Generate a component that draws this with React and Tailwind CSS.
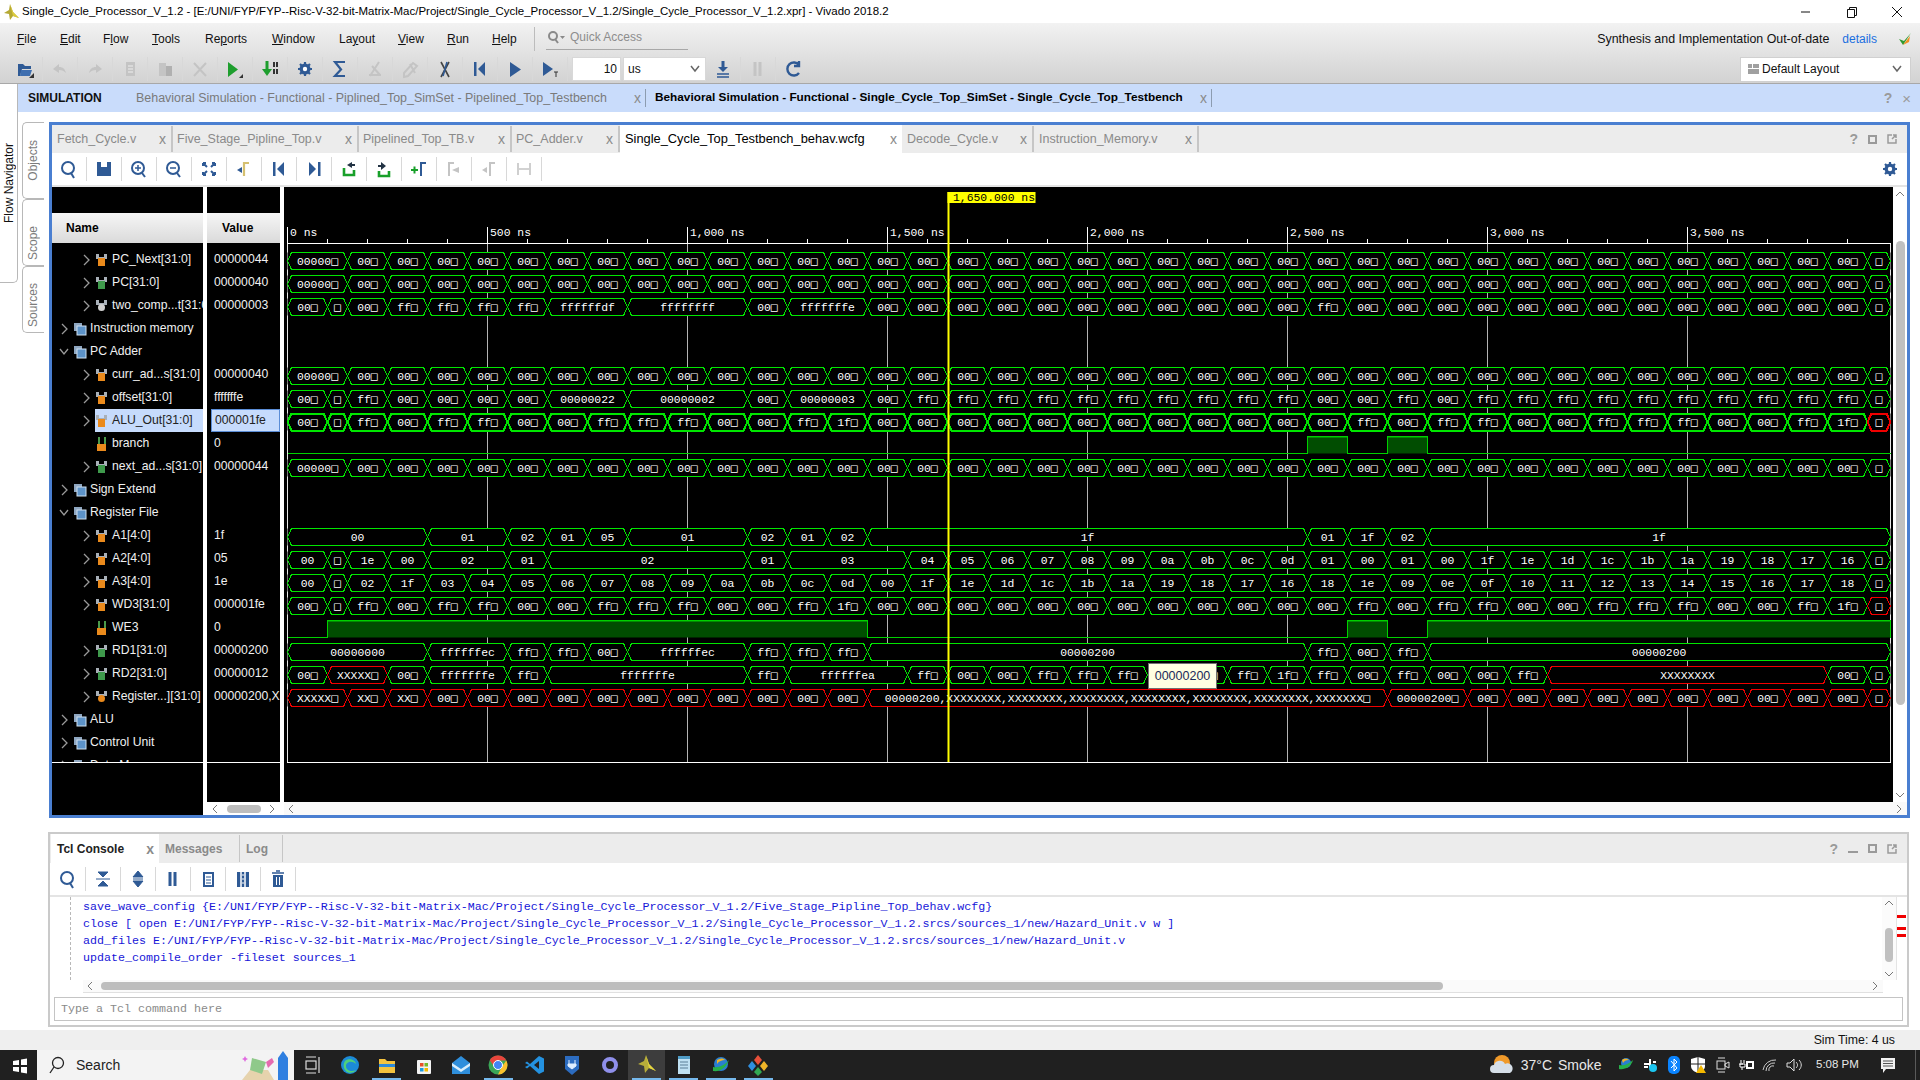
import React from 'react';

const NAVY = '#2f5a95';
const GREY = '#c4c4c4';
const GREEN = '#00e600';
const RED = '#f00000';

// ---------- waveform data ----------
const o = '00□';
const f = 'ff□';
const b = '□';
const l = '1f□';
const z = '00000□';
const rep = (label, n) => Array.from({ length: n }, () => [label, 1]);
const list = (s) => s.split(' ').map((x) => [x === 'b' ? b : x, 1]);

const pcRow = [[z, 2], ...rep(o, 38), [b, 1]];
const aluRow = [
  [o, 1], [b, 1], [f, 1], [o, 1], [f, 1], [f, 1], [o, 1], [o, 1], [f, 1], [f, 1], [f, 1], [o, 1], [o, 1], [f, 1], [l, 1],
  ...rep(o, 12),
  [f, 1], [o, 1], [f, 1], [f, 1], [o, 1], [o, 1], [f, 1], [f, 1], [f, 1], [o, 1], [o, 1], [f, 1], [l, 1], [b, 1, true],
];
const longX = '00000200,XXXXXXXX,XXXXXXXX,XXXXXXXX,XXXXXXXX,XXXXXXXX,XXXXXXXX,XXXXXXX□';

const busRows = {
  0: pcRow,
  1: pcRow,
  2: [[o, 1], [b, 1], [o, 1], ...rep(f, 4), ['ffffffdf', 2], ['ffffffff', 3], [o, 1], ['fffffffe', 2], ...rep(o, 11), [f, 1], ...rep(o, 13), [b, 1]],
  5: pcRow,
  6: [[o, 1], [b, 1], [f, 1], ...rep(o, 4), ['00000022', 2], ['00000002', 3], [o, 1], ['00000003', 2], [o, 1], ...rep(f, 10), [o, 1], [o, 1], [f, 1], [o, 1], ...rep(f, 10), [b, 1]],
  7: aluRow,
  9: pcRow,
  12: [['00', 4], ['01', 2], ['02', 1], ['01', 1], ['05', 1], ['01', 3], ['02', 1], ['01', 1], ['02', 1], ['1f', 11], ['01', 1], ['1f', 1], ['02', 1], ['1f', 12]],
  13: [['00', 1], [b, 1], ['1e', 1], ['00', 1], ['02', 2], ['01', 1], ['02', 5], ['01', 1], ['03', 3], ...list('04 05 06 07 08 09 0a 0b 0c 0d 01 00 01 00 1f 1e 1d 1c 1b 1a 19 18 17 16 b')],
  14: list('00 b 02 1f 03 04 05 06 07 08 09 0a 0b 0c 0d 00 1f 1e 1d 1c 1b 1a 19 18 17 16 18 1e 09 0e 0f 10 11 12 13 14 15 16 17 18 b'),
  15: aluRow,
  17: [['00000000', 4], ['ffffffec', 2], [f, 1], [f, 1], [o, 1], ['ffffffec', 3], [f, 1], [f, 1], [f, 1], ['00000200', 11], [f, 1], [o, 1], [f, 1], ['00000200', 12]],
  18: [[o, 1], ['XXXXX□', 2, true], [o, 1], ['fffffffe', 2], [f, 1], ['fffffffe', 5], [f, 1], ['ffffffea', 3], [f, 1], [o, 1], [o, 1], ...rep(f, 6), [l, 1], [f, 1], [o, 1], [f, 1], [o, 1], [o, 1], [f, 1], ['XXXXXXXX', 7, true], [o, 1], [b, 1]],
  19: [['XXXXX□', 2], ['XX□', 1], ['XX□', 1], ...rep(o, 11), [longX, 13], ['00000200□', 2], ...rep(o, 10), [b, 1]].map((s) => [s[0], s[1], true]),
};

// bit rows: offsets in px where the level is high
const bitRows = {
  8: [[1020, 1060], [1100, 1140]],
  16: [[40, 580], [1060, 1100], [1140, 1603]],
};

const slotX = (k) => (k === 0 ? 0 : k === 1 ? 40 : k >= 41 ? 1603 : 60 + 40 * (k - 2));
const X0 = 3.5;
const rowTop = (i) => 65.5 + 23 * i;

const BusLabel = ({ text }) => {
  if (!text.endsWith('□')) return text;
  return (
    <>
      {text.slice(0, -1)}
      <tspan className="font-['DejaVu_Sans_Mono',monospace] text-[11.5px]">□</tspan>
    </>
  );
};

const Bus = ({ i, segs }) => {
  let k = 0;
  const top = rowTop(i);
  const thick = i === 7;
  return (
    <g>
      <rect x={X0} y={top} width={1603} height={17} fill="#000" />
      {segs.map((s, idx) => {
        const a = X0 + slotX(k);
        k += s[1];
        const c = X0 + slotX(k);
        const mid = top + 8.5;
        const pts = `${a},${mid} ${a + 4},${top} ${c - 4},${top} ${c},${mid} ${c - 4},${top + 17} ${a + 4},${top + 17}`;
        return (
          <g key={idx}>
            <polygon points={pts} fill="none" stroke={s[2] ? RED : GREEN} strokeWidth={thick ? 2 : 1} shapeRendering="crispEdges" />
            <text x={(a + c) / 2} y={top + 12.5} textAnchor="middle" fill="#fff" className="text-[11.4px]"><BusLabel text={s[0]} /></text>
          </g>
        );
      })}
    </g>
  );
};

const Bit = ({ i, pulses }) => {
  const top = rowTop(i);
  const bot = top + 17;
  let d = `M${X0} ${bot}`;
  pulses.forEach(([a, c]) => {
    d += ` L${X0 + a} ${bot} L${X0 + a} ${top} L${X0 + c} ${top} L${X0 + c} ${bot}`;
  });
  d += ` L${X0 + 1603} ${bot}`;
  return (
    <g>
      {pulses.map(([a, c]) => (
        <g key={a}>
          <rect x={X0 + a} y={top} width={c - a} height={17} fill="#014d01" />
          <rect x={X0 + a} y={top + 0.5} width={c - a} height={1} fill="#008c00" />
        </g>
      ))}
      <path d={d} fill="none" stroke="#00d000" strokeWidth="1" shapeRendering="crispEdges" />
    </g>
  );
};

const Waveform = () => {
  const majors = [0, 1, 2, 3, 4, 5, 6, 7];
  const labels = ['0 ns', '500 ns', '1,000 ns', '1,500 ns', '2,000 ns', '2,500 ns', '3,000 ns', '3,500 ns'];
  const minors = Array.from({ length: 40 }, (_, n) => n);
  return (
    <svg width="1609" height="615" className="block font-['Liberation_Mono',monospace]">
      <rect width="1609" height="615" fill="#000" />
      {majors.slice(1).map((m) => (
        <rect key={m} x={3 + 200 * m} y={56} width={1} height={519} fill="#b4b4b4" />
      ))}
      <rect x={3} y={40} width={1} height={535} fill="#e8e8e8" />
      <rect x={1606} y={56} width={1} height={519} fill="#e8e8e8" />
      <rect x={3} y={56} width={1604} height={1} fill="#fff" />
      <rect x={3} y={575} width={1604} height={1} fill="#fff" />
      {minors.map((n) => (
        <rect key={n} x={3 + 40 * n} y={n % 5 === 0 ? 40 : 52} width={1} height={n % 5 === 0 ? 16 : 4} fill="#fff" />
      ))}
      {majors.map((m) => (
        <text key={m} x={6 + 200 * m} y={49} fill="#fff" className="text-[11.4px]">{labels[m]}</text>
      ))}
      {Object.entries(busRows).map(([i, segs]) => (
        <Bus key={i} i={Number(i)} segs={segs} />
      ))}
      {Object.entries(bitRows).map(([i, p]) => (
        <Bit key={i} i={Number(i)} pulses={p} />
      ))}
      <rect x={663.5} y={5} width={2} height={570} fill="#ffff00" />
      <rect x={663.5} y={5} width={88} height={11} fill="#ffff00" />
      <text x={669} y={14} fill="#000" className="text-[11.4px]">1,650.000 ns</text>
    </svg>
  );
};

// ---------- small svg icons ----------
const Svg = ({ w = 20, h = 20, children, className = '' }) => (
  <svg width={w} height={h} viewBox={`0 0 ${w} ${h}`} className={`block shrink-0 ${className}`}>{children}</svg>
);

const Corner = () => <path d="M19 19h-5l5-5z" fill="#333" />;

const icons = {
  open: <><Corner /><path d="M3 5h5l2 2h6v3H7l-2 7H3z" fill={NAVY} /><path d="M6 11h11l-2 6H5z" fill="#3f6fb0" /></>,
  undo: <path d="M3 10l6-5v3c4 0 6 2 7 6-2-2-4-3-7-3v3z" fill={GREY} />,
  redo: <path d="M17 10l-6-5v3c-4 0-6 2-7 6 2-2 4-3 7-3v3z" fill={GREY} />,
  copy: <><rect x="6" y="3" width="9" height="14" fill={GREY} /><path d="M8 7h5M8 10h5M8 13h5" stroke="#eee" /></>,
  paste: <><rect x="4" y="4" width="7" height="13" fill={GREY} /><rect x="11" y="7" width="6" height="10" fill="#b0b0b0" /></>,
  cross: <path d="M4 4l12 13M16 4L4 17" stroke={GREY} strokeWidth="2" />,
  run: <><path d="M3 3l10 7.500L3 18z" fill="#1e9e2e" /><path d="M18 19h-4l4-4z" fill="#333" /></>,
  step: <><path d="M7 2v9" stroke="#1e9e2e" strokeWidth="3" /><path d="M2 10h10l-5 7z" fill="#1e9e2e" /><rect x="13" y="3" width="2" height="5" fill="#333" /><rect x="16" y="3" width="2" height="5" fill="#333" /><rect x="13" y="10" width="2" height="5" fill="#333" /><rect x="16" y="10" width="2" height="5" fill="#333" /></>,
  gear: <><circle cx="10" cy="10" r="5.500" fill={NAVY} /><path d="M10 3v14M3 10h14M5 5l10 10M15 5L5 15" stroke={NAVY} strokeWidth="2.200" /><circle cx="10" cy="10" r="2.200" fill="#fff" /></>,
  sigma: <path d="M15 3H5l6 7.5L5 17h10" fill="none" stroke={NAVY} strokeWidth="2.2" />,
  checkOff: <><path d="M5 17L14 3M4 16h12" stroke={GREY} strokeWidth="2" /><path d="M7 7l8 9" stroke={GREY} strokeWidth="2" /></>,
  pencil: <path d="M4 14L13 4l4 3-9 10-4 1zM10 5l5 9" fill="none" stroke={GREY} strokeWidth="2" />,
  strike: <><path d="M6 3l8 15M14 3L6 18" stroke="#444" strokeWidth="1.600" /><path d="M12 3L8 17" stroke={NAVY} strokeWidth="1.600" /></>,
  first: <><rect x="4" y="3" width="2.5" height="14" fill={NAVY} /><path d="M15 3v14L8 10z" fill={NAVY} /></>,
  play: <path d="M5 3l11 7.5L5 18z" fill={NAVY} />,
  playT: <><path d="M3 3l10 7L3 17z" fill={NAVY} /><path d="M14 13h4M16 13v5" stroke="#333" /></>,
  last: <><rect x="14" y="3" width="2.5" height="14" fill={NAVY} /><path d="M5 3v14l7-7z" fill={NAVY} /></>,
  down: <><path d="M10 2v7" stroke={NAVY} strokeWidth="3" /><path d="M5 8h10l-5 5z" fill={NAVY} /><path d="M4 15h12M4 18h12" stroke={NAVY} strokeWidth="1.5" /></>,
  pause: <path d="M7 3v14M12 3v14" stroke={GREY} strokeWidth="3" />,
  pauseDark: <path d="M7 3v14M12 3v14" stroke={NAVY} strokeWidth="3" />,
  reload: <path d="M15 6a6.5 6.5 0 1 0 0 8M15 2v5h-5" fill="none" stroke={NAVY} strokeWidth="2.4" />,
  search: <><circle cx="9" cy="9" r="6" fill="none" stroke={NAVY} strokeWidth="2" /><path d="M12 14l3 5" stroke={NAVY} strokeWidth="2" /></>,
  save: <path fillRule="evenodd" d="M3 3h14v14H3zM7 3h6v5H7z" fill={NAVY} />,
  zoomIn: <><circle cx="9" cy="9" r="6" fill="none" stroke={NAVY} strokeWidth="2" /><path d="M13 14l3 4" stroke={NAVY} strokeWidth="2" /><path d="M6 9h6M9 6v6" stroke={NAVY} strokeWidth="1.5" /></>,
  zoomOut: <><circle cx="9" cy="9" r="6" fill="none" stroke={NAVY} strokeWidth="2" /><path d="M13 14l3 4" stroke={NAVY} strokeWidth="2" /><path d="M6 9h6" stroke={NAVY} strokeWidth="1.5" /></>,
  fit: <path d="M4 4l4 4M4 4h3M4 4v3M16 4l-4 4M16 4h-3M16 4v3M4 16l4-4M4 16h3M4 16v-3M16 16l-4-4M16 16h-3M16 16v-3" fill="none" stroke={NAVY} strokeWidth="2" />,
  marker: <><path d="M3 11l5-3v6z" fill={NAVY} /><path d="M10 17V4h5" fill="none" stroke="#d5c070" strokeWidth="2.2" /></>,
  greenUp: <><path d="M5 9v7h10v-5" fill="none" stroke="#18a02a" strokeWidth="2.600" /><path d="M8 6l5-3v6z" fill="#234" /><path d="M13 6h3" stroke="#234" strokeWidth="2" /></>,
  greenDn: <><path d="M5 12v5h10v-5" fill="none" stroke="#18a02a" strokeWidth="2.600" /><path d="M12 7L7 3v8z" fill="#234" /><path d="M4 7h3" stroke="#234" strokeWidth="2" /></>,
  addCur: <><path d="M2 11h7M5.5 7.5v7" stroke="#18a02a" strokeWidth="2" /><path d="M12 17V4h5" fill="none" stroke={NAVY} strokeWidth="2" /></>,
  gr1: <><path d="M5 17V4h5" fill="none" stroke={GREY} strokeWidth="2" /><path d="M8 11l7-3v6z" fill={GREY} /></>,
  gr2: <><path d="M3 11l5-3v6z" fill={GREY} /><path d="M11 17V4h5" fill="none" stroke={GREY} strokeWidth="2" /></>,
  gr3: <path d="M4 4v12M16 4v12M5 10h10" stroke={GREY} strokeWidth="1.6" />,
  collapse: <path d="M5 3h10l-5 5zM10 12l5 5H5zM3 10h14" fill={NAVY} stroke={NAVY} />,
  expand: <path d="M10 2l5 6H5zM5 12h10l-5 6zM5 10h10" fill={NAVY} stroke={NAVY} />,
  doc: <><rect x="6" y="4" width="9" height="13" fill="#fff" stroke={NAVY} strokeWidth="2" /><path d="M8 8h5M8 11h5M8 14h5" stroke={NAVY} /></>,
  cols: <><rect x="4" y="3" width="12" height="15" fill={NAVY} /><path d="M8 3v15M12 3v15" stroke="#fff" strokeWidth="1.500" /><path d="M9 6h2M9 10h2M9 14h2" stroke="#fff" /></>,
  trash: <><path d="M5 6h10v12H5z" fill={NAVY} /><path d="M4 4h12M8 2h4" stroke={NAVY} strokeWidth="1.6" /><path d="M8.5 8v8M11.5 8v8" stroke="#fff" /></>,
};

const Tool = ({ name, w = 'w-[35px]', sep = true }) => (
  <div className={`${w} h-[24px] flex items-center justify-center shrink-0 ${sep ? 'border-r border-[#d8d8d8]' : ''}`}>
    <Svg>{icons[name]}</Svg>
  </div>
);

const Close = ({ className = '' }) => <span className={`text-[#8a8a8a] text-[14px] leading-none ${className}`}>x</span>;

const Help = () => <span className="text-[#9a9a9a] font-bold text-[14px] leading-none">?</span>;
const Box = () => <span className="block w-[9px] h-[9px] border-2 border-[#9a9a9a]" />;
const Pop = () => (
  <Svg w={10} h={10}><path d="M5 1H1v8h8V5M5 5l4-4M6 1h3v3" fill="none" stroke="#9a9a9a" strokeWidth="1.5" /></Svg>
);

// ---------- title + menu ----------
const menus = [
  ['', 'F', 'ile', 'w-[43px]'], ['', 'E', 'dit', 'w-[43px]'], ['F', 'l', 'ow', 'w-[49px]'], ['', 'T', 'ools', 'w-[53px]'],
  ['Re', 'p', 'orts', 'w-[67px]'], ['', 'W', 'indow', 'w-[67px]'], ['La', 'y', 'out', 'w-[59px]'], ['', 'V', 'iew', 'w-[49px]'],
  ['', 'R', 'un', 'w-[45px]'], ['', 'H', 'elp', 'w-[42px]'],
];

const TitleBar = () => (
  <div className="h-[23px] bg-white flex items-center shrink-0">
    <Svg w={18} h={20} className="ml-[3px] mr-[1px]">
      <path d="M7 2l3 8 6 6-6-2-3 4-1-6-5-1 5-3z" fill="#b5a934" />
      <path d="M7 2l3 8 6 6-6-2z" fill="#dccb3c" />
    </Svg>
    <span className="text-[11.47px] text-black whitespace-nowrap">
      Single_Cycle_Processor_V_1.2 - [E:/UNI/FYP/FYP--Risc-V-32-bit-Matrix-Mac/Project/Single_Cycle_Processor_V_1.2/Single_Cycle_Processor_V_1.2.xpr] - Vivado 2018.2
    </span>
    <div className="ml-auto flex items-center text-[#111]">
      <Svg w={46} h={20}><path d="M19 10h9" stroke="#111" /></Svg>
      <Svg w={46} h={20}><path d="M19.5 7.5h7v8h-7zM21.5 7.5v-2h7v8h-2" fill="none" stroke="#111" /></Svg>
      <Svg w={46} h={20}><path d="M18 5l10 10M28 5L18 15" stroke="#111" /></Svg>
    </div>
  </div>
);

const MenuBar = () => (
  <div className="h-[32px] flex items-center pl-[17px] pr-[4px]">
    {menus.map(([a, u, c, w]) => (
      <span key={a + u + c} className={`${w} shrink-0 text-[12px] text-[#111]`}>
        {a}<span className="underline">{u}</span>{c}
      </span>
    ))}
    <div className="h-[24px] border-l border-[#bcbcbc] pl-[11px] flex items-center">
      <div className="w-[142px] h-[25px] border-b border-[#a8a8a8] flex items-center mt-[-4px]">
        <Svg w={24} h={16}><circle cx="7" cy="7" r="4" fill="none" stroke="#8a8a8a" strokeWidth="2" /><path d="M9 10l3 4" stroke="#8a8a8a" strokeWidth="2" /><path d="M14 7h5l-2.500 3z" fill="#8a8a8a" /></Svg>
        <span className="text-[12px] text-[#8d8d8d]">Quick Access</span>
      </div>
    </div>
    <span className="ml-auto text-[12.4px] text-[#111]">Synthesis and Implementation Out-of-date</span>
    <span className="ml-[13px] text-[12px] text-[#1a6fe0]">details</span>
    <Svg w={20} h={20} className="ml-[19px]"><path d="M3 10l4 6 8-12-7 8z" fill="#2f9a2f" /><path d="M7 16l6-3 1-6z" fill="#f09020" /></Svg>
  </div>
);

const MainTools = () => (
  <div className="h-[28px] flex items-center pl-[8px] pr-[9px]">
    {['open', 'undo', 'redo', 'copy', 'paste', 'cross', 'run', 'step', 'gear', 'sigma', 'checkOff', 'pencil', 'strike', 'first', 'play', 'playT'].map((n) => (
      <Tool key={n} name={n} />
    ))}
    <div className="ml-[4px] w-[49px] h-[24px] bg-white border border-[#d8d8d8] text-[12px] text-[#111] flex items-center justify-end pr-[3px]">10</div>
    <div className="ml-[2px] w-[83px] h-[24px] bg-white border border-[#d8d8d8] text-[12px] text-[#111] flex items-center justify-between pl-[4px] pr-[5px]">
      us
      <Svg w={10} h={8}><path d="M1 1l4 5 4-5" fill="none" stroke="#666" strokeWidth="1.5" /></Svg>
    </div>
    <div className="flex">
      <Tool name="down" />
      <Tool name="pause" />
      <Tool name="reload" sep={false} />
    </div>
    <div className="ml-auto w-[171px] h-[25px] bg-white border border-[#d0d0d0] flex items-center pl-[6px] pr-[8px] text-[12px] text-[#111]">
      <Svg w={14} h={12} className="mr-[1px]"><rect x="1" y="1" width="4" height="4" fill="#a0a0a0" /><rect x="6" y="1" width="6" height="4" fill="#a0a0a0" /><rect x="1" y="6" width="11" height="5" fill="#a0a0a0" /></Svg>
      Default Layout
      <Svg w={10} h={8} className="ml-auto"><path d="M1 1l4 5 4-5" fill="none" stroke="#666" strokeWidth="1.5" /></Svg>
    </div>
  </div>
);

const SimBar = () => (
  <div className="h-[28px] bg-[#c9dcfb] flex items-center shrink-0 text-[12px]">
    <span className="ml-[10px] w-[108px] font-bold text-[#111]">SIMULATION</span>
    <span className="text-[#7a7a7a] w-[498px] whitespace-nowrap text-[12.45px]">Behavioral Simulation - Functional - Piplined_Top_SimSet - Pipelined_Top_Testbench</span>
    <Close className="w-[11px]" />
    <div className="h-[18px] border-l border-[#8c9cb0] mr-[9px]" />
    <span className="text-black font-bold w-[545px] whitespace-nowrap text-[11.8px]">Behavioral Simulation - Functional - Single_Cycle_Top_SimSet - Single_Cycle_Top_Testbench</span>
    <Close className="w-[11px]" />
    <div className="h-[18px] border-l border-[#8c9cb0]" />
    <div className="ml-auto flex items-center gap-[10px] pr-[9px]">
      <Help />
      <span className="text-[#9a9a9a] text-[15px] leading-none">×</span>
    </div>
  </div>
);

// ---------- waveform panel ----------
const fileTabs = [
  ['Fetch_Cycle.v', 'w-[121px]', 'pl-[5px]'], ['Five_Stage_Pipline_Top.v', 'w-[186px]', 'pl-[4px]'], ['Pipelined_Top_TB.v', 'w-[153px]', 'pl-[4px]'],
  ['PC_Adder.v', 'w-[108px]', 'pl-[4px]'], ['Single_Cycle_Top_Testbench_behav.wcfg', 'w-[282px]', 'pl-[5px]', true], ['Decode_Cycle.v', 'w-[132px]', 'pl-[5px]'],
  ['Instruction_Memory.v', 'w-[165px]', 'pl-[5px]'],
];

const SigIcon = ({ t }) => {
  const body = t === 'in' ? '#3f9a4c' : t === 'int' ? '#9a9a9a' : '#ea8a1c';
  if (t === 'bit') {
    return (
      <Svg w={14} h={14}>
        <path d="M4 0v7M10 0v7" stroke="#4b9a4b" strokeWidth="2" />
        <rect x="2" y="7" width="9" height="7" fill="#ea8a1c" />
      </Svg>
    );
  }
  return (
    <Svg w={14} h={14}>
      <path d="M1 1h3v3h5V1h3v5H1z" fill="#a9b0b8" />
      {t === 'int' || t === 'reg'
        ? <circle cx="6.500" cy="8.500" r="3.500" fill={t === 'reg' ? '#ea8a1c' : '#d0d0d0'} />
        : <rect x="3" y="5" width="7" height="8" fill={body} />}
    </Svg>
  );
};

const GroupIcon = () => (
  <Svg w={14} h={14}>
    <rect x="1" y="1" width="8" height="8" fill="#8ea6c0" />
    <rect x="4" y="4" width="9" height="9" fill="#5d93c8" stroke="#cfe0ef" />
  </Svg>
);

const Chevron = ({ open }) => (
  <Svg w={10} h={12}>
    <path d={open ? 'M1 3l4 5 4-5' : 'M3 1l5 5-5 5'} fill="none" stroke="#9a9a9a" strokeWidth="1.3" />
  </Svg>
);

const rows = [
  { n: 'PC_Next[31:0]', t: 'out', v: '00000044' }, { n: 'PC[31:0]', t: 'in', v: '00000040' }, { n: 'two_comp...t[31:0]', t: 'int', v: '00000003' },
  { n: 'Instruction memory', g: true }, { n: 'PC Adder', g: true, open: true },
  { n: 'curr_ad...s[31:0]', t: 'out', v: '00000040' }, { n: 'offset[31:0]', t: 'out', v: 'fffffffe' },
  { n: 'ALU_Out[31:0]', t: 'out', v: '000001fe', sel: true }, { n: 'branch', t: 'bit', v: '0', bit: true }, { n: 'next_ad...s[31:0]', t: 'in', v: '00000044' },
  { n: 'Sign Extend', g: true }, { n: 'Register File', g: true, open: true },
  { n: 'A1[4:0]', t: 'out', v: '1f' }, { n: 'A2[4:0]', t: 'out', v: '05' }, { n: 'A3[4:0]', t: 'out', v: '1e' }, { n: 'WD3[31:0]', t: 'out', v: '000001fe' },
  { n: 'WE3', t: 'bit', v: '0', bit: true }, { n: 'RD1[31:0]', t: 'in', v: '00000200' }, { n: 'RD2[31:0]', t: 'in', v: '00000012' },
  { n: 'Register...][31:0]', t: 'reg', v: '00000200,XXXXXXXX' },
  { n: 'ALU', g: true }, { n: 'Control Unit', g: true }, { n: 'Data Memory', g: true },
];

const NameColumn = () => (
  <div className="w-[151px] h-full bg-black shrink-0 flex flex-col">
    <div className="h-[26px]" />
    <div className="h-[30px] bg-linear-to-b from-[#f6f6f6] to-[#dadada] font-bold text-[12px] text-black flex items-center pl-[14px]">Name</div>
    <div className="h-[519px] overflow-hidden pt-[5px] text-[12.2px] text-[#f0f0f0]">
      {rows.map((r) => (
        <div key={r.n} className={`h-[23px] flex items-center whitespace-nowrap ${r.g ? 'pl-[7px]' : 'pl-[29px]'}`}>
          {r.bit ? <div className="w-[10px]" /> : <Chevron open={r.open} />}
          <div className={`ml-[4px] flex items-center h-[23px] ${r.sel ? 'bg-[#c6dbfc] text-[#222] w-[108px]' : ''}`}>
            {r.g ? <GroupIcon /> : <SigIcon t={r.t} />}
            <span className="ml-[3px]">{r.n}</span>
          </div>
        </div>
      ))}
    </div>
    <div className="h-[1px] bg-white" />
  </div>
);

const ValueColumn = () => (
  <div className="w-[73px] h-full bg-black shrink-0 flex flex-col">
    <div className="h-[26px]" />
    <div className="h-[30px] bg-linear-to-b from-[#f6f6f6] to-[#dadada] font-bold text-[12px] text-black flex items-center pl-[15px]">Value</div>
    <div className="h-[519px] overflow-hidden pt-[5px] text-[12.2px] text-[#f0f0f0]">
      {rows.map((r) => (
        <div key={r.n} className="h-[23px] flex items-center whitespace-nowrap overflow-hidden">
          <div className={`h-[23px] w-full flex items-center overflow-hidden ${r.sel ? 'ml-[4px] pl-[3px] bg-[#c6dbfc] text-[#222] border border-[#5b8dd6]' : 'pl-[7px]'}`}>{r.v}</div>
        </div>
      ))}
    </div>
    <div className="h-[1px] bg-white" />
    <div className="flex-1" />
    <div className="h-[13px] bg-white flex items-center justify-between px-[5px]">
      <Svg w={6} h={10}><path d="M5 1L1 5l4 4" fill="none" stroke="#777" /></Svg>
      <div className="w-[34px] h-[8px] rounded-full bg-[#bdbdbd]" />
      <Svg w={6} h={10}><path d="M1 1l4 4-4 4" fill="none" stroke="#777" /></Svg>
    </div>
  </div>
);

const WavePanel = () => (
  <div className="w-[1861px] h-[696px] border-[3px] border-[#4a7fd1] flex flex-col shrink-0 bg-white">
    <div className="h-[28px] bg-[#ececec] flex shrink-0 text-[12.5px]">
      {fileTabs.map(([name, w, pl, active]) => (
        <div key={name} className={`${w} ${pl} flex items-center justify-between pr-[5px] whitespace-nowrap ${active ? 'bg-white text-black text-[12.85px]' : 'text-[#8a8a8a] border-r-2 border-[#c6c6c6] my-[1px]'}`}>
          {name}
          <Close />
        </div>
      ))}
      <div className="ml-auto flex items-center gap-[10px] pr-[10px]">
        <Help /><Box /><Pop />
      </div>
    </div>
    <div className="h-[32px] flex items-center shrink-0 pr-[7px]">
      {['search', 'save', 'zoomIn', 'zoomOut', 'fit', 'marker', 'first', 'last', 'greenUp', 'greenDn', 'addCur', 'gr1', 'gr2', 'gr3'].map((n, i) => (
        <Tool key={i} name={n} />
      ))}
      <Svg className="ml-auto">{icons.gear}</Svg>
    </div>
    <div className="h-[2px] bg-[#e4e4e4] shrink-0" />
    <div className="flex h-[628px]">
      <NameColumn />
      <div className="w-[4px] bg-white" />
      <ValueColumn />
      <div className="w-[4px] bg-white" />
      <div className="flex-1 flex flex-col min-w-0">
        <div className="flex h-[615px]">
          <div className="relative w-[1609px] h-[615px] overflow-hidden">
            <Waveform />
            <div className="absolute left-[864px] top-[476px] w-[69px] h-[26px] bg-[#ffffe1] border border-[#707070] flex items-center justify-center text-[12.5px] text-[#1b2a5a]">00000200</div>
          </div>
          <div className="flex-1 bg-white flex flex-col items-center py-[4px]">
            <Svg w={10} h={6}><path d="M1 5l4-4 4 4" fill="none" stroke="#777" /></Svg>
            <div className="w-[9px] h-[464px] mt-[44px] rounded-full bg-[#c0c0c0]" />
            <Svg w={10} h={6} className="mt-auto"><path d="M1 1l4 4 4-4" fill="none" stroke="#777" /></Svg>
          </div>
        </div>
        <div className="h-[13px] bg-[#f9f9f9] flex items-center justify-between pl-[4px] pr-[5px]">
          <Svg w={6} h={10}><path d="M5 1L1 5l4 4" fill="none" stroke="#777" /></Svg>
          <Svg w={6} h={10}><path d="M1 1l4 4-4 4" fill="none" stroke="#777" /></Svg>
        </div>
      </div>
    </div>
  </div>
);

// ---------- console ----------
const tclLines = [
  'save_wave_config {E:/UNI/FYP/FYP--Risc-V-32-bit-Matrix-Mac/Project/Single_Cycle_Processor_V_1.2/Five_Stage_Pipline_Top_behav.wcfg}',
  'close [ open E:/UNI/FYP/FYP--Risc-V-32-bit-Matrix-Mac/Project/Single_Cycle_Processor_V_1.2/Single_Cycle_Processor_V_1.2.srcs/sources_1/new/Hazard_Unit.v w ]',
  'add_files E:/UNI/FYP/FYP--Risc-V-32-bit-Matrix-Mac/Project/Single_Cycle_Processor_V_1.2/Single_Cycle_Processor_V_1.2.srcs/sources_1/new/Hazard_Unit.v',
  'update_compile_order -fileset sources_1',
];

const ConsolePanel = () => (
  <div className="w-[1861px] h-[195px] border-2 border-[#cacaca] flex flex-col shrink-0 bg-white">
    <div className="h-[29px] bg-[#ececec] flex shrink-0 text-[12px]">
      <div className="w-[108px] ml-[1px] bg-white flex items-center justify-between pl-[6px] pr-[5px] font-bold text-[#222]">
        Tcl Console
        <Close />
      </div>
      <div className="w-[81px] flex items-center pl-[6px] text-[#8a8a8a] font-bold border-r border-[#c6c6c6] my-[1px]">Messages</div>
      <div className="w-[43px] flex items-center pl-[6px] text-[#8a8a8a] font-bold border-r border-[#c6c6c6] my-[1px]">Log</div>
      <div className="ml-auto flex items-center gap-[10px] pr-[10px]">
        <Help />
        <span className="block w-[10px] h-[2px] bg-[#9a9a9a] mt-[6px]" />
        <Box /><Pop />
      </div>
    </div>
    <div className="h-[32px] flex items-center shrink-0 pl-[1px]">
      {['search', 'collapse', 'expand', 'pauseDark', 'doc', 'cols', 'trash'].map((n) => (
        <Tool key={n} name={n} />
      ))}
    </div>
    <div className="h-[2px] bg-[#e4e4e4] shrink-0" />
    <div className="h-[83px] flex shrink-0">
      <div className="w-[20px]" />
      <div className="w-[1812px] border-l border-dashed border-[#b8b8b8] pl-[12px] pt-[2px] text-[11.67px] leading-[17px] text-[#1616d8] font-['Liberation_Mono',monospace] whitespace-pre overflow-hidden">
        {tclLines.map((t) => <div key={t}>{t}</div>)}
      </div>
      <div className="w-[15px] bg-[#fbfbfb] border-r border-[#e4e4e4] flex flex-col items-center py-[3px]">
        <Svg w={10} h={6}><path d="M1 5l4-4 4 4" fill="none" stroke="#777" /></Svg>
        <div className="w-[8px] h-[34px] mt-[22px] rounded-full bg-[#c0c0c0]" />
        <Svg w={10} h={6} className="mt-auto"><path d="M1 1l4 4 4-4" fill="none" stroke="#777" /></Svg>
      </div>
      <div className="flex-1 relative">
        <div className="absolute left-0 top-[18px] w-[9px] h-[3px] bg-[#f00000]" />
        <div className="absolute left-0 top-[30px] w-[9px] h-[3px] bg-[#f00000]" />
        <div className="absolute left-0 top-[37px] w-[9px] h-[3px] bg-[#f00000]" />
      </div>
    </div>
    <div className="h-[13px] ml-[33px] mr-[24px] bg-[#fafafa] border-b border-[#e0e0e0] flex items-center gap-[8px] pl-[4px] pr-[5px] shrink-0">
      <Svg w={6} h={10}><path d="M5 1L1 5l4 4" fill="none" stroke="#777" /></Svg>
      <div className="w-[1342px] h-[8px] rounded-full bg-[#bdbdbd]" />
      <Svg w={6} h={10} className="ml-auto"><path d="M1 1l4 4-4 4" fill="none" stroke="#777" /></Svg>
    </div>
    <div className="h-[24px] mt-[4px] mx-[4px] pt-[2px] border border-[#c4c4c4] flex items-center pl-[6px] text-[11.67px] text-[#8a8a8a] font-['Liberation_Mono',monospace] shrink-0">Type a Tcl command here</div>
  </div>
);

// ---------- side tabs ----------
const Vert = ({ children, className = '' }) => (
  <span className={`[writing-mode:vertical-rl] rotate-180 text-[12px] ${className}`}>{children}</span>
);

const SideTabs = () => (
  <div className="w-[31px] shrink-0 pl-[4px]">
    <div className="w-[22px] h-[77px] border border-r-0 border-[#b8b8b8] rounded-l-[5px] flex items-center justify-center pr-[2px]">
      <Vert className="text-[#7c7c7c]">Objects</Vert>
    </div>
    <div className="w-[22px] h-[67px] border border-r-0 border-[#b8b8b8] rounded-l-[5px] flex items-end justify-center pr-[2px] pb-[5px]">
      <Vert className="text-[#7c7c7c]">Scope</Vert>
    </div>
    <div className="w-[22px] h-[67px] border border-r-0 border-[#b8b8b8] rounded-l-[5px] flex items-end justify-center pr-[2px] pb-[5px]">
      <Vert className="text-[#7c7c7c]">Sources</Vert>
    </div>
  </div>
);

// ---------- taskbar ----------
const appIcons = [
  { key: 'task', el: <><rect x="4" y="7" width="10" height="8" fill="none" stroke="#ddd" strokeWidth="1.2" /><path d="M4 3h10M4 19h10M17 3v16" stroke="#ddd" strokeWidth="1.2" /></> },
  { key: 'edge', el: <><circle cx="11" cy="11" r="9" fill="#1c8ad8" /><path d="M7 12c0-4 6-6 10-2-1-5-8-6-11-3-2 3-2 8 2 11 4 2 8 0 9-2-4 2-10 1-10-4z" fill="#4fd07a" /></> },
  { key: 'folder', line: true, el: <><path d="M3 5h6l2 2h8v12H3z" fill="#f5c33e" /><rect x="3" y="10" width="16" height="3" fill="#2f8bd8" /></> },
  { key: 'store', el: <><rect x="4" y="6" width="14" height="14" rx="1" fill="#f3f3f3" /><rect x="7" y="9" width="3.500" height="3.500" fill="#e8502b" /><rect x="11.500" y="9" width="3.500" height="3.500" fill="#74b92b" /><rect x="7" y="14" width="3.500" height="3.500" fill="#1c9ae0" /><rect x="11.500" y="14" width="3.500" height="3.500" fill="#f5b900" /></> },
  { key: 'mail', el: <><path d="M2 9l9-7 9 7v11H2z" fill="#2f8fdc" /><path d="M2 9l9 6 9-6v3l-9 6-9-6z" fill="#d8eefc" /></> },
  { key: 'chrome', line: true, el: <><circle cx="11" cy="11" r="9.500" fill="#3aa757" /><path d="M2.800 6.200A9.500 9.500 0 0 1 19.300 6.500H11l-4 6z" fill="#e8453c" /><path d="M19.300 6.500A9.500 9.500 0 0 1 11 20.500l4-8z" fill="#fbc02d" /><circle cx="11" cy="11" r="4.500" fill="#4285f4" stroke="#fff" /></> },
  { key: 'code', el: <path d="M15 2l5 2.500v13L15 20 6 12l-3 2.500L1 13l4-2-4-2 2-1.500L6 10zM15 7l-5 4 5 4z" fill="#2492e0" /> },
  { key: 'plug', el: <><path d="M4 2h14v13l-7 6-7-6z" fill="#2c6cc0" /><path d="M8 6v4M14 6v4M7 10h8v2l-4 3-4-3z" stroke="#dfeeff" fill="#dfeeff" /></> },
  { key: 'cortana', el: <circle cx="11" cy="11" r="6" fill="none" stroke="#8f8fea" strokeWidth="4" /> },
  { key: 'vivado', active: true, line: true, el: <><path d="M10 1l3 9 7 7-7-3-4 5-1-7-6-2 6-3z" fill="#b7ad3a" /><path d="M10 1l3 9 7 7-7-3z" fill="#e6d640" /></> },
  { key: 'note', line: true, el: <><rect x="5" y="2" width="12" height="18" fill="#bfe0f2" /><path d="M5 2h12v3H5z" fill="#4f9cc6" /><path d="M7 8h8M7 11h8M7 14h8" stroke="#5a7f97" /></> },
  { key: 'globe', line: true, el: <><circle cx="11" cy="10" r="7" fill="#2a7fd0" /><path d="M3 13c6 1 12-2 16-7-3 8-9 12-16 11z" fill="#27b04a" /><path d="M7 6c3-2 6-2 8 0-3 0-6 1-8 4z" fill="#f0b428" /></> },
  { key: 'diamond', line: true, el: <><path d="M11 1l4 5-4 5-4-5z" fill="#e8503a" /><path d="M5 7l4 5-4 5-4-5z" fill="#2f8fe0" /><path d="M17 7l4 5-4 5-4-5z" fill="#f0b428" /><path d="M11 13l4 5-4 4-4-4z" fill="#32a852" /></> },
];

const Taskbar = () => (
  <div className="h-[30px] bg-[#202020] flex items-center shrink-0">
    <div className="w-[37px] flex justify-center">
      <Svg w={18} h={18}><path d="M3 5l6-1v5H3zM11 3.500l6-1V9h-6zM3 11h6v5l-6-1zM11 11h6v6.500l-6-1z" fill="#fff" /></Svg>
    </div>
    <div className="w-[257px] h-full bg-[#f3f3f3] flex items-center pl-[11px] text-[14px] text-[#222]">
      <Svg w={18} h={18}><circle cx="10" cy="7" r="5.500" fill="none" stroke="#222" strokeWidth="1.3" /><path d="M6 11l-4 6" stroke="#222" strokeWidth="1.3" /></Svg>
      <span className="ml-[10px]">Search</span>
      <Svg w={52} h={30} className="ml-auto">
        <path d="M0 30l8-10h18l6 10z" fill="#e6d3ad" />
        <path d="M10 8l14 4-4 12-12-4z" fill="#8fc98a" />
        <path d="M24 12l6-4 2 4-6 6z" fill="#e56bb0" />
        <path d="M36 8l5-7 5 7v22H36z" fill="#2f7fe0" />
        <path d="M3 6l1 2 2 1-2 1-1 2-1-2-2-1 2-1z" fill="#e06ae0" />
      </Svg>
    </div>
    <div className="flex">
      {appIcons.map((a) => (
        <div key={a.key} className={`relative w-[37.14px] h-[30px] flex items-center justify-center ${a.active ? 'bg-[#3d3d3d]' : ''}`}>
          <Svg w={22} h={22}>{a.el}</Svg>
          {a.line && <div className="absolute bottom-0 left-[4px] right-[4px] h-[2px] bg-[#76b9ed]" />}
        </div>
      ))}
    </div>
    <div className="ml-auto flex items-center text-[#e8e8e8]">
      <Svg w={26} h={22}>
        <circle cx="13" cy="9" r="8" fill="#f09a2a" />
        <path d="M5 19a4 4 0 0 1 0-8 6 6 0 0 1 11-1 5 5 0 0 1 5 9z" fill="#d6dfe8" />
      </Svg>
      <span className="ml-[6px] text-[14px]">37°C</span>
      <span className="ml-[6px] text-[14px] w-[56px]">Smoke</span>
      <div className="flex items-center">
        {[
          <><circle cx="9" cy="7" r="5" fill="#2a7fd0" /><path d="M2 9c5 1 10-1 14-5-2 7-8 10-14 9z" fill="#27b04a" /><path d="M5 4c3-2 5-1 7 0-3 0-5 1-6 3z" fill="#f0b428" /></>,
          <><path d="M3 8h6V5M9 3v9M3 11h4M12 6h3" stroke="#fff" strokeWidth="2" /><circle cx="12" cy="12" r="4" fill="#1cc6f0" /></>,
          <><rect x="3" y="0" width="12" height="18" rx="5" fill="#0a84ff" /><path d="M6 5l6 7-3 3V3l3 3-6 6" fill="none" stroke="#fff" /></>,
          <><path d="M2 3l7-2 7 2v7c0 4-4 6-7 7-3-1-7-3-7-7z" fill="#fff" /><path d="M9 1v16M2 8h14" stroke="#202020" /><path d="M12 9l5 8H7z" fill="#f5b900" /></>,
          <><rect x="4" y="5" width="8" height="8" fill="none" stroke="#ddd" /><path d="M12 8l4-2v6l-4-2zM5 2h7M5 16h7" stroke="#ddd" fill="none" /></>,
          <><path d="M2 8h4M4 4v3M7 4v3M3 8h5v3H3zM5 11v3" stroke="#fff" /><rect x="9" y="5" width="8" height="8" fill="#fff" /><rect x="11" y="7" width="4" height="4" fill="#202020" /></>,
          <path d="M2 14a12 12 0 0 1 13-10M5 15a8 8 0 0 1 9-8M8 15a4 4 0 0 1 5-5" fill="none" stroke="#ccc" />,
          <><path d="M2 7h3l4-4v12l-4-4H2z" fill="none" stroke="#ddd" /><path d="M11 6c2 2 2 4 0 6M14 4c3 3 3 7 0 10" fill="none" stroke="#ddd" /></>,
        ].map((el, i) => (
          <div key={i} className="w-[24px] flex justify-center"><Svg w={18} h={18}>{el}</Svg></div>
        ))}
      </div>
      <span className="ml-[10px] w-[58px] text-[11.5px]">5:08 PM</span>
      <Svg w={20} h={20} className="ml-[4px]"><path d="M3 3h14v11H8l-3 4v-4H3z" fill="#f2f2f2" /><path d="M5 6h10M5 8.500h10M5 11h10" stroke="#555" /></Svg>
      <div className="w-[18px] h-[30px] border-r border-[#5a5a5a] mr-[4px]" />
    </div>
  </div>
);

const App = () => (
  <div className="w-[1920px] h-[1080px] overflow-hidden bg-white flex flex-col font-['Liberation_Sans',Arial,sans-serif]">
    <TitleBar />
    <div className="h-[60px] shrink-0 bg-linear-to-b from-[#f2f2f2] to-[#d2d2d2]">
      <MenuBar />
      <MainTools />
    </div>
    <div className="h-[1px] bg-[#a8a8a8] shrink-0" />
    <div className="flex h-[946px] shrink-0">
      <div className="w-[18px] h-[199px] border-r border-b border-[#b8b8b8] rounded-br-[5px] shrink-0 flex justify-center items-center">
        <Vert className="text-[#111]">Flow Navigator</Vert>
      </div>
      <div className="flex-1 flex flex-col min-w-0">
        <SimBar />
        <div className="flex mt-[10px]">
          <SideTabs />
          <WavePanel />
        </div>
        <div className="ml-[30px] mt-[14px]">
          <ConsolePanel />
        </div>
      </div>
    </div>
    <div className="h-[20px] bg-[#efefef] shrink-0 flex items-center justify-end pr-[25px] text-[12.3px] text-[#111]">Sim Time: 4 us</div>
    <Taskbar />
  </div>
);

export default App;
